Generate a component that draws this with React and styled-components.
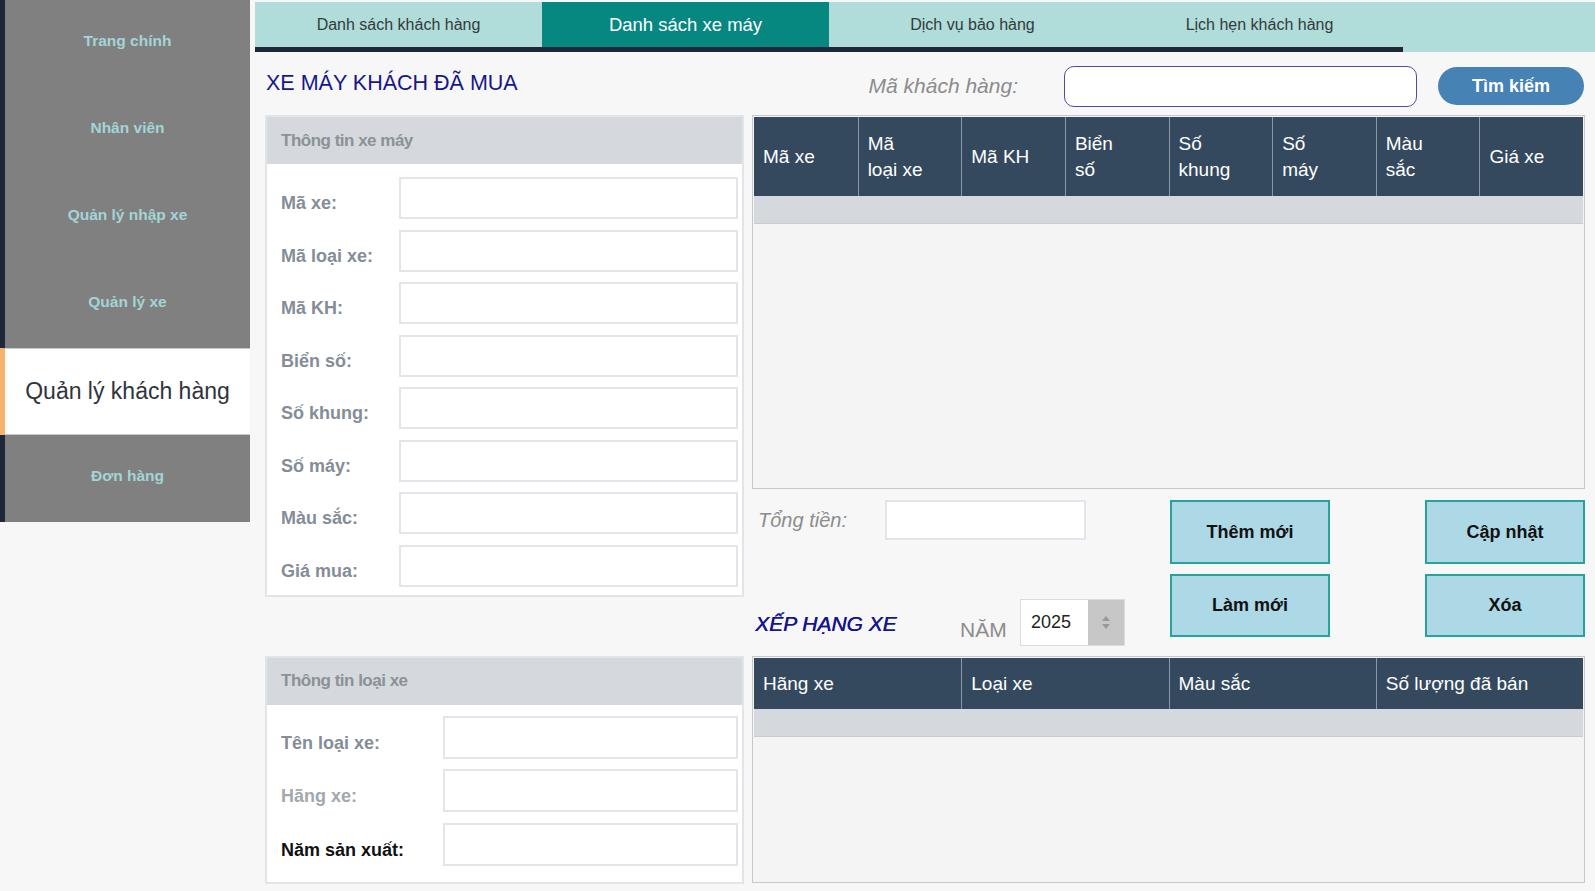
import React from "react";
import styled, { createGlobalStyle } from "styled-components";

const GlobalStyle = createGlobalStyle`
  html, body {
    margin: 0;
    padding: 0;
  }
  body {
    background: #f7f7f7;
    font-family: "Liberation Sans", Arial, sans-serif;
    overflow: hidden;
  }
  * {
    box-sizing: border-box;
  }
`;

const Page = styled.div`
  display: flex;
  width: 1595px;
  height: 891px;
  background: #f7f7f7;
`;

const Sidebar = styled.nav`
  width: 250px;
  flex: none;
  align-self: flex-start;
  display: flex;
  flex-direction: column;
`;

const NavItem = styled.div`
  height: 87px;
  display: flex;
  align-items: center;
  justify-content: center;
  padding-bottom: ${(p) => (p.$active ? 0 : 5)}px;
  border-left: 5px solid ${(p) => (p.$active ? "#f6b36c" : "#1e2839")};
  background: ${(p) => (p.$active ? "#ffffff" : "#808080")};
  color: ${(p) => (p.$active ? "#30343b" : "#a3d5d6")};
  font-size: ${(p) => (p.$active ? "23px" : "15.5px")};
  font-weight: ${(p) => (p.$active ? 400 : 700)};
  box-shadow: ${(p) =>
    p.$active ? "inset 0 1px 0 #c9c9c9, inset 0 -1px 0 #c9c9c9" : "none"};
`;

const Main = styled.main`
  flex: 1;
  min-width: 0;
  margin-left: 5px;
  display: flex;
  flex-direction: column;
`;

const TabBar = styled.div`
  margin-top: 2px;
  height: 50px;
  display: flex;
  background: #b0dcd9;
`;

const TabGroup = styled.div`
  display: flex;
  border-bottom: 5px solid #1e2838;
`;

const Tab = styled.div`
  width: 287px;
  display: flex;
  align-items: center;
  justify-content: center;
  background: ${(p) => (p.$active ? "#06877f" : "transparent")};
  color: ${(p) => (p.$active ? "#ffffff" : "#333b3b")};
  font-size: ${(p) => (p.$active ? "18.5px" : "16px")};
`;

const Body = styled.div`
  display: grid;
  grid-template-columns: 479px 833px;
  grid-template-rows: 63px 768px;
  column-gap: 8px;
  padding-left: 10px;
`;

const Title = styled.h1`
  margin: 0;
  align-self: center;
  padding-left: 1px;
  font-size: 21.5px;
  font-weight: 400;
  color: #16168a;
`;

const SearchBar = styled.div`
  display: flex;
  align-items: center;
  justify-content: flex-end;
  padding: 5px 1px 0 0;
`;

const SearchLabel = styled.span`
  font-size: 21px;
  font-style: italic;
  color: #8c8c8c;
  margin-right: 46px;
`;

const SearchInput = styled.input`
  width: 353px;
  height: 41px;
  margin-right: 21px;
  border: 1.5px solid #4d4da6;
  border-radius: 10px;
  background: #fff;
  outline: none;
`;

const SearchButton = styled.button`
  width: 146px;
  height: 38px;
  border: none;
  border-radius: 19px;
  background: #4682b4;
  color: #fff;
  font-family: inherit;
  font-size: 18px;
  font-weight: 700;
`;

const LeftCol = styled.div`
  display: flex;
  flex-direction: column;
  gap: 59px;
`;

const Card = styled.section`
  border: 2px solid #e2e5e8;
  background: #fff;
`;

const CardHeader = styled.div`
  height: 47px;
  display: flex;
  align-items: center;
  padding-left: 14px;
  background: #d5d9dd;
  color: #8a9199;
  font-size: 17px;
  font-weight: 700;
  letter-spacing: -0.5px;
`;

const CardBody = styled.div`
  display: grid;
  grid-template-columns: ${(p) => p.$labelW}px 1fr;
  grid-auto-rows: ${(p) => p.$rowH}px;
  row-gap: 10.5px;
  padding: ${(p) => p.$pt}px 4px ${(p) => p.$pb}px 14px;
`;

const labelTones = {
  gray: "#858d96",
  light: "#a3a8ad",
  dark: "#111111",
};

const FieldLabel = styled.label`
  display: flex;
  align-items: flex-end;
  padding-bottom: 5px;
  font-size: 18px;
  font-weight: 700;
  color: ${(p) => labelTones[p.$tone || "gray"]};
`;

const FieldInput = styled.input`
  height: 100%;
  width: 100%;
  border: 2px solid #e2e5e9;
  background: #fff;
  outline: none;
`;

const RightCol = styled.div`
  display: flex;
  flex-direction: column;
`;

const TableFrame = styled.div`
  flex: ${(p) => (p.$h ? "none" : "1")};
  height: ${(p) => (p.$h ? `${p.$h}px` : "auto")};
  border: 1px solid #c5c9cd;
  background: #f4f4f4;
  padding: 1px;
`;

const HeadRow = styled.div`
  display: grid;
  grid-template-columns: repeat(${(p) => p.$cols}, 1fr);
  height: ${(p) => p.$h}px;
  background: #34495e;
`;

const HeadCell = styled.div`
  display: flex;
  align-items: center;
  padding-left: 9px;
  color: #fff;
  font-size: 19px;
  line-height: 26px;
  border-left: 1px solid #8797a8;
  &:first-child {
    border-left: none;
  }
`;

const StripeRow = styled.div`
  height: 28px;
  background: #d5d9de;
  border-bottom: 1px solid #c8ccd0;
`;

const ActionArea = styled.div`
  display: grid;
  grid-template-columns: 418px 160px 1fr 160px;
  grid-template-rows: 64px 73px;
  row-gap: 10px;
  padding: 11px 0 9px;
`;

const TotalRow = styled.div`
  grid-column: 1;
  align-self: start;
  height: 40px;
  display: flex;
  align-items: center;
  padding-left: 6px;
`;

const TotalLabel = styled.span`
  width: 127px;
  font-size: 20px;
  font-style: italic;
  color: #8c8c8c;
`;

const TotalInput = styled.input`
  width: 201px;
  height: 40px;
  border: 2px solid #e2e5e9;
  background: #fff;
  outline: none;
`;

const ActionButton = styled.button`
  grid-column: ${(p) => p.$col};
  align-self: start;
  height: ${(p) => p.$h || 64}px;
  border: 2px solid #27a39c;
  background: #add8e6;
  color: #111;
  font-family: inherit;
  font-size: 18px;
  font-weight: 700;
`;

const RankRow = styled.div`
  grid-column: 1;
  display: flex;
  align-items: flex-end;
  padding-left: 3px;
`;

const RankTitle = styled.h2`
  margin: 0 0 11px;
  width: 205px;
  flex: none;
  font-size: 21px;
  font-weight: 400;
  font-style: italic;
  color: #14148f;
  text-shadow: 0.4px 0 0 #14148f;
`;

const YearLabel = styled.span`
  width: 60px;
  flex: none;
  margin-bottom: 5px;
  font-size: 21px;
  color: #8c8c8c;
`;

const Spinner = styled.div`
  width: 105px;
  height: 47px;
  margin-bottom: 1px;
  display: flex;
  border: 1px solid #dcdcdc;
  background: #fff;
`;

const SpinValue = styled.span`
  flex: 1;
  display: flex;
  align-items: center;
  padding-left: 10px;
  font-size: 18px;
  color: #222;
`;

const SpinArrows = styled.span`
  width: 36px;
  display: flex;
  flex-direction: column;
  align-items: center;
  justify-content: center;
  gap: 3px;
  background: #c7c7c7;
`;

const Arrow = styled.span`
  width: 0;
  height: 0;
  border-left: 4px solid transparent;
  border-right: 4px solid transparent;
  ${(p) => (p.$up ? "border-bottom" : "border-top")}: 5px solid #999;
`;

const navItems = ["Trang chính", "Nhân viên", "Quản lý nhập xe", "Quản lý xe", "Quản lý khách hàng", "Đơn hàng"];
const tabs = ["Danh sách khách hàng", "Danh sách xe máy", "Dịch vụ bảo hàng", "Lịch hẹn khách hàng"];
const bikeFields = ["Mã xe:", "Mã loại xe:", "Mã KH:", "Biển số:", "Số khung:", "Số máy:", "Màu sắc:", "Giá mua:"];
const typeFields = [
  { label: "Tên loại xe:", tone: "gray" },
  { label: "Hãng xe:", tone: "light" },
  { label: "Năm sản xuất:", tone: "dark" },
];
const bikeCols = [["Mã xe"], ["Mã", "loại xe"], ["Mã KH"], ["Biển", "số"], ["Số", "khung"], ["Số", "máy"], ["Màu", "sắc"], ["Giá xe"]];
const rankCols = ["Hãng xe", "Loại xe", "Màu sắc", "Số lượng đã bán"];

function App() {
  return (
    <Page>
      <GlobalStyle />
      <Sidebar>
        {navItems.map((item) => (
          <NavItem key={item} $active={item === "Quản lý khách hàng"}>
            {item}
          </NavItem>
        ))}
      </Sidebar>

      <Main>
        <TabBar>
          <TabGroup>
            {tabs.map((t) => (
              <Tab key={t} $active={t === "Danh sách xe máy"}>
                {t}
              </Tab>
            ))}
          </TabGroup>
        </TabBar>

        <Body>
          <Title>XE MÁY KHÁCH ĐÃ MUA</Title>
          <SearchBar>
            <SearchLabel>Mã khách hàng:</SearchLabel>
            <SearchInput />
            <SearchButton>Tìm kiếm</SearchButton>
          </SearchBar>

          <LeftCol>
            <Card>
              <CardHeader>Thông tin xe máy</CardHeader>
              <CardBody $labelW={118} $rowH={42} $pt={13} $pb={8}>
                {bikeFields.map((f) => (
                  <React.Fragment key={f}>
                    <FieldLabel>{f}</FieldLabel>
                    <FieldInput />
                  </React.Fragment>
                ))}
              </CardBody>
            </Card>
            <Card>
              <CardHeader>Thông tin loại xe</CardHeader>
              <CardBody $labelW={162} $rowH={43} $pt={11} $pb={16}>
                {typeFields.map((f) => (
                  <React.Fragment key={f.label}>
                    <FieldLabel $tone={f.tone}>{f.label}</FieldLabel>
                    <FieldInput />
                  </React.Fragment>
                ))}
              </CardBody>
            </Card>
          </LeftCol>

          <RightCol>
            <TableFrame $h={374}>
              <HeadRow $cols={8} $h={79}>
                {bikeCols.map((lines) => (
                  <HeadCell key={lines.join(" ")}>
                    <span>
                      {lines.map((l, i) => (
                        <React.Fragment key={l}>
                          {i > 0 && <br />}
                          {l}
                        </React.Fragment>
                      ))}
                    </span>
                  </HeadCell>
                ))}
              </HeadRow>
              <StripeRow />
            </TableFrame>

            <ActionArea>
              <TotalRow>
                <TotalLabel>Tổng tiền:</TotalLabel>
                <TotalInput />
              </TotalRow>
              <ActionButton $col={2}>Thêm mới</ActionButton>
              <ActionButton $col={4}>Cập nhật</ActionButton>
              <RankRow>
                <RankTitle>XẾP HẠNG XE</RankTitle>
                <YearLabel>NĂM</YearLabel>
                <Spinner>
                  <SpinValue>2025</SpinValue>
                  <SpinArrows>
                    <Arrow $up />
                    <Arrow />
                  </SpinArrows>
                </Spinner>
              </RankRow>
              <ActionButton $col={2} $h={63}>Làm mới</ActionButton>
              <ActionButton $col={4} $h={63}>Xóa</ActionButton>
            </ActionArea>

            <TableFrame>
              <HeadRow $cols={4} $h={51}>
                {rankCols.map((c) => (
                  <HeadCell key={c}>{c}</HeadCell>
                ))}
              </HeadRow>
              <StripeRow />
            </TableFrame>
          </RightCol>
        </Body>
      </Main>
    </Page>
  );
}

export default App;
